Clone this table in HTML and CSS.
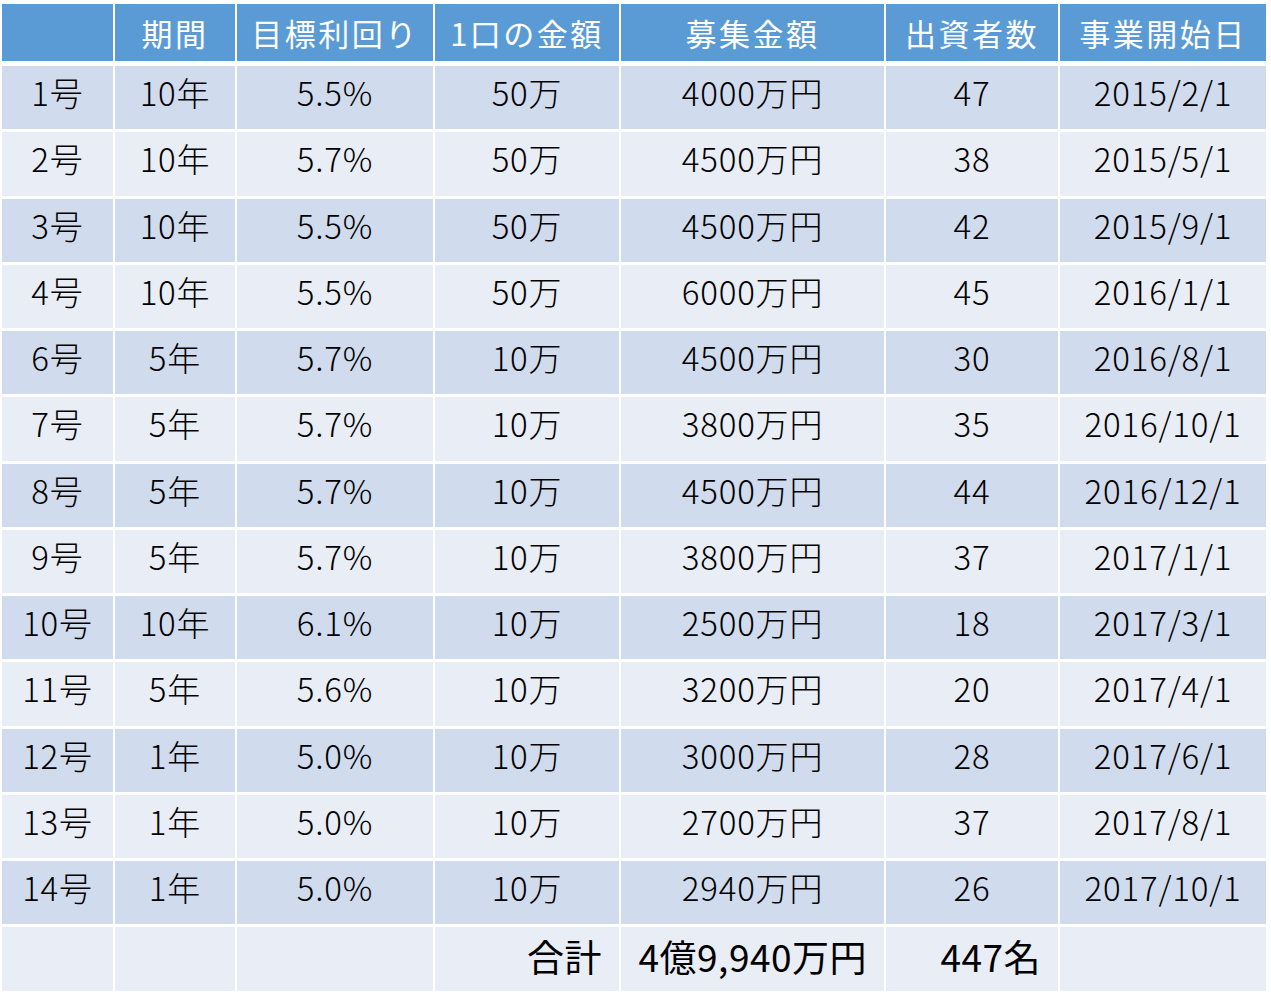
FILE: index.html
```html
<!DOCTYPE html>
<html lang="ja">
<head>
<meta charset="utf-8">
<title>ファンド一覧</title>
<link rel="stylesheet" href="styles.css">
</head>
<body>
<table class="funds">
  <colgroup>
    <col class="c1"><col class="c2"><col class="c3"><col class="c4"><col class="c5"><col class="c6"><col class="c7">
  </colgroup>
  <thead>
    <tr><th></th><th>期間</th><th>目標利回り</th><th>1口の金額</th><th>募集金額</th><th>出資者数</th><th>事業開始日</th></tr>
  </thead>
  <tbody>
    <tr><td>1号</td><td>10年</td><td>5.5%</td><td>50万</td><td>4000万円</td><td>47</td><td>2015/2/1</td></tr>
    <tr><td>2号</td><td>10年</td><td>5.7%</td><td>50万</td><td>4500万円</td><td>38</td><td>2015/5/1</td></tr>
    <tr><td>3号</td><td>10年</td><td>5.5%</td><td>50万</td><td>4500万円</td><td>42</td><td>2015/9/1</td></tr>
    <tr><td>4号</td><td>10年</td><td>5.5%</td><td>50万</td><td>6000万円</td><td>45</td><td>2016/1/1</td></tr>
    <tr><td>6号</td><td>5年</td><td>5.7%</td><td>10万</td><td>4500万円</td><td>30</td><td>2016/8/1</td></tr>
    <tr><td>7号</td><td>5年</td><td>5.7%</td><td>10万</td><td>3800万円</td><td>35</td><td>2016/10/1</td></tr>
    <tr><td>8号</td><td>5年</td><td>5.7%</td><td>10万</td><td>4500万円</td><td>44</td><td>2016/12/1</td></tr>
    <tr><td>9号</td><td>5年</td><td>5.7%</td><td>10万</td><td>3800万円</td><td>37</td><td>2017/1/1</td></tr>
    <tr><td>10号</td><td>10年</td><td>6.1%</td><td>10万</td><td>2500万円</td><td>18</td><td>2017/3/1</td></tr>
    <tr><td>11号</td><td>5年</td><td>5.6%</td><td>10万</td><td>3200万円</td><td>20</td><td>2017/4/1</td></tr>
    <tr><td>12号</td><td>1年</td><td>5.0%</td><td>10万</td><td>3000万円</td><td>28</td><td>2017/6/1</td></tr>
    <tr><td>13号</td><td>1年</td><td>5.0%</td><td>10万</td><td>2700万円</td><td>37</td><td>2017/8/1</td></tr>
    <tr><td>14号</td><td>1年</td><td>5.0%</td><td>10万</td><td>2940万円</td><td>26</td><td>2017/10/1</td></tr>
  </tbody>
  <tfoot>
    <tr><td></td><td></td><td></td><td class="total">合計</td><td class="total">4億9,940万円</td><td class="total">447名</td><td></td></tr>
  </tfoot>
</table>
</body>
</html>
```

FILE: styles.css
```css
html, body {
  margin: 0;
  padding: 0;
  background: #ffffff;
}

body {
  font-family: "Noto Sans CJK JP", "Noto Sans", sans-serif;
  color: #000000;
}

.funds {
  border-collapse: separate;
  border-spacing: 2px 3px;
  margin-top: 1px;
  table-layout: fixed;
  width: 1268px;
}

.c1 { width: 111px; }
.c2 { width: 120px; }
.c3 { width: 196px; }
.c4 { width: 184px; }
.c5 { width: 263px; }
.c6 { width: 172px; }
.c7 { width: 206px; }

.funds th {
  background: #5b9bd5;
  color: #ffffff;
  font-weight: 400;
  font-size: 31px;
  letter-spacing: 2.5px;
  height: 59px;
  box-sizing: border-box;
  padding: 0;
  text-align: center;
  vertical-align: middle;
  line-height: 1;
  border-bottom: 2px solid #ffffff;
}

.funds td {
  font-size: 33px;
  font-weight: 300;
  letter-spacing: 0.8px;
  height: 63.25px;
  padding: 0 0 10px 0;
  box-sizing: border-box;
  text-align: center;
  vertical-align: middle;
  line-height: 1;
}

.funds tbody tr:nth-child(odd) td {
  background: #d0dbee;
}

.funds tbody tr:nth-child(even) td {
  background: #e9edf6;
}

.funds tfoot td {
  background: #e9edf6;
  height: 64px;
}

.funds tfoot .total {
  text-align: right;
  padding-right: 17px;
  font-size: 37px;
  font-weight: 400;
  letter-spacing: 0.5px;
  padding-bottom: 6px;
}
```
